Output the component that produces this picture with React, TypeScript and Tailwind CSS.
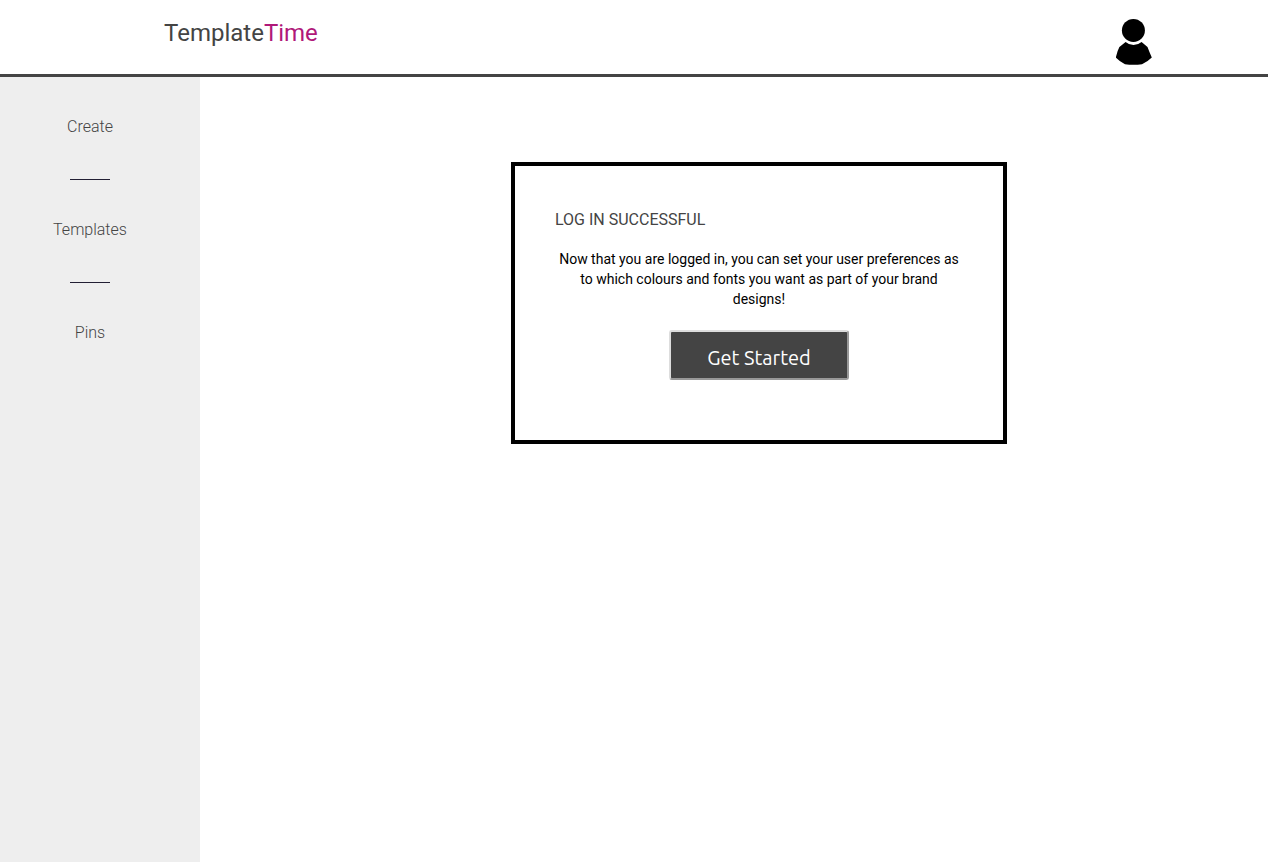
import React from "react";

const links = ["Create", "Templates", "Pins"];

function UserIcon() {
  return (
    <svg viewBox="0 0 36 48" className="h-12 w-9" fill="#000" aria-hidden="true">
      <circle cx="17.4" cy="12.4" r="11.5" />
      <path d="M9.6 24 Q13 27 17.5 27 Q22 27 25.6 24 L31.5 29 Q33 33 35.8 39.6 Q31.5 44 26 46.2 Q17.5 47.4 9 46.2 Q4 44 -0.2 39.6 Q1.2 33 3.4 29 Z" />
    </svg>
  );
}

export default function App() {
  return (
    <div className="flex min-h-screen flex-col bg-white font-['Roboto',sans-serif] text-black">
      <header className="flex items-start justify-between border-b-3 border-[#444] pr-29 pl-41 pt-4 pb-2">
        <a href="#" className="text-2xl leading-[34px] text-[#444]">
          Template<span className="text-[#b01879]">Time</span>
        </a>
        <button type="button" aria-label="Account" className="pt-0.5">
          <UserIcon />
        </button>
      </header>
      <div className="flex grow">
        <nav className="w-50 shrink-0 bg-[#eee] pt-10 pr-5">
          <ul className="flex flex-col items-center">
            {links.map((label, i) => (
              <li key={label} className="flex flex-col items-center">
                {i > 0 && <span className="mt-[42px] mb-10 h-px w-10 bg-[#221f33]" />}
                <a href="#" className="text-base leading-5 font-light text-[#444]">
                  {label}
                </a>
              </li>
            ))}
          </ul>
        </nav>
        <main className="flex grow items-start justify-center pt-[85px] pl-[50px]">
          <section className="w-124 border-4 border-black px-10 pt-[42px] pb-15">
            <h1 className="text-base leading-6 text-[#444]">LOG IN SUCCESSFUL</h1>
            <p className="pt-[17px] text-center text-sm leading-5">
              Now that you are logged in, you can set your user preferences as to which colours and fonts you want as part of your brand designs!
            </p>
            <div className="flex justify-center pt-[21px]">
              <button
                type="button"
                className="h-12.5 w-45 rounded-[3px] border-2 border-t-[#ddd] border-r-[#999] border-b-[#999] border-l-[#ddd] bg-[#444] pt-1.5 font-['Ubuntu','Noto_Sans',sans-serif] text-xl text-white"
              >
                Get Started
              </button>
            </div>
          </section>
        </main>
      </div>
    </div>
  );
}
